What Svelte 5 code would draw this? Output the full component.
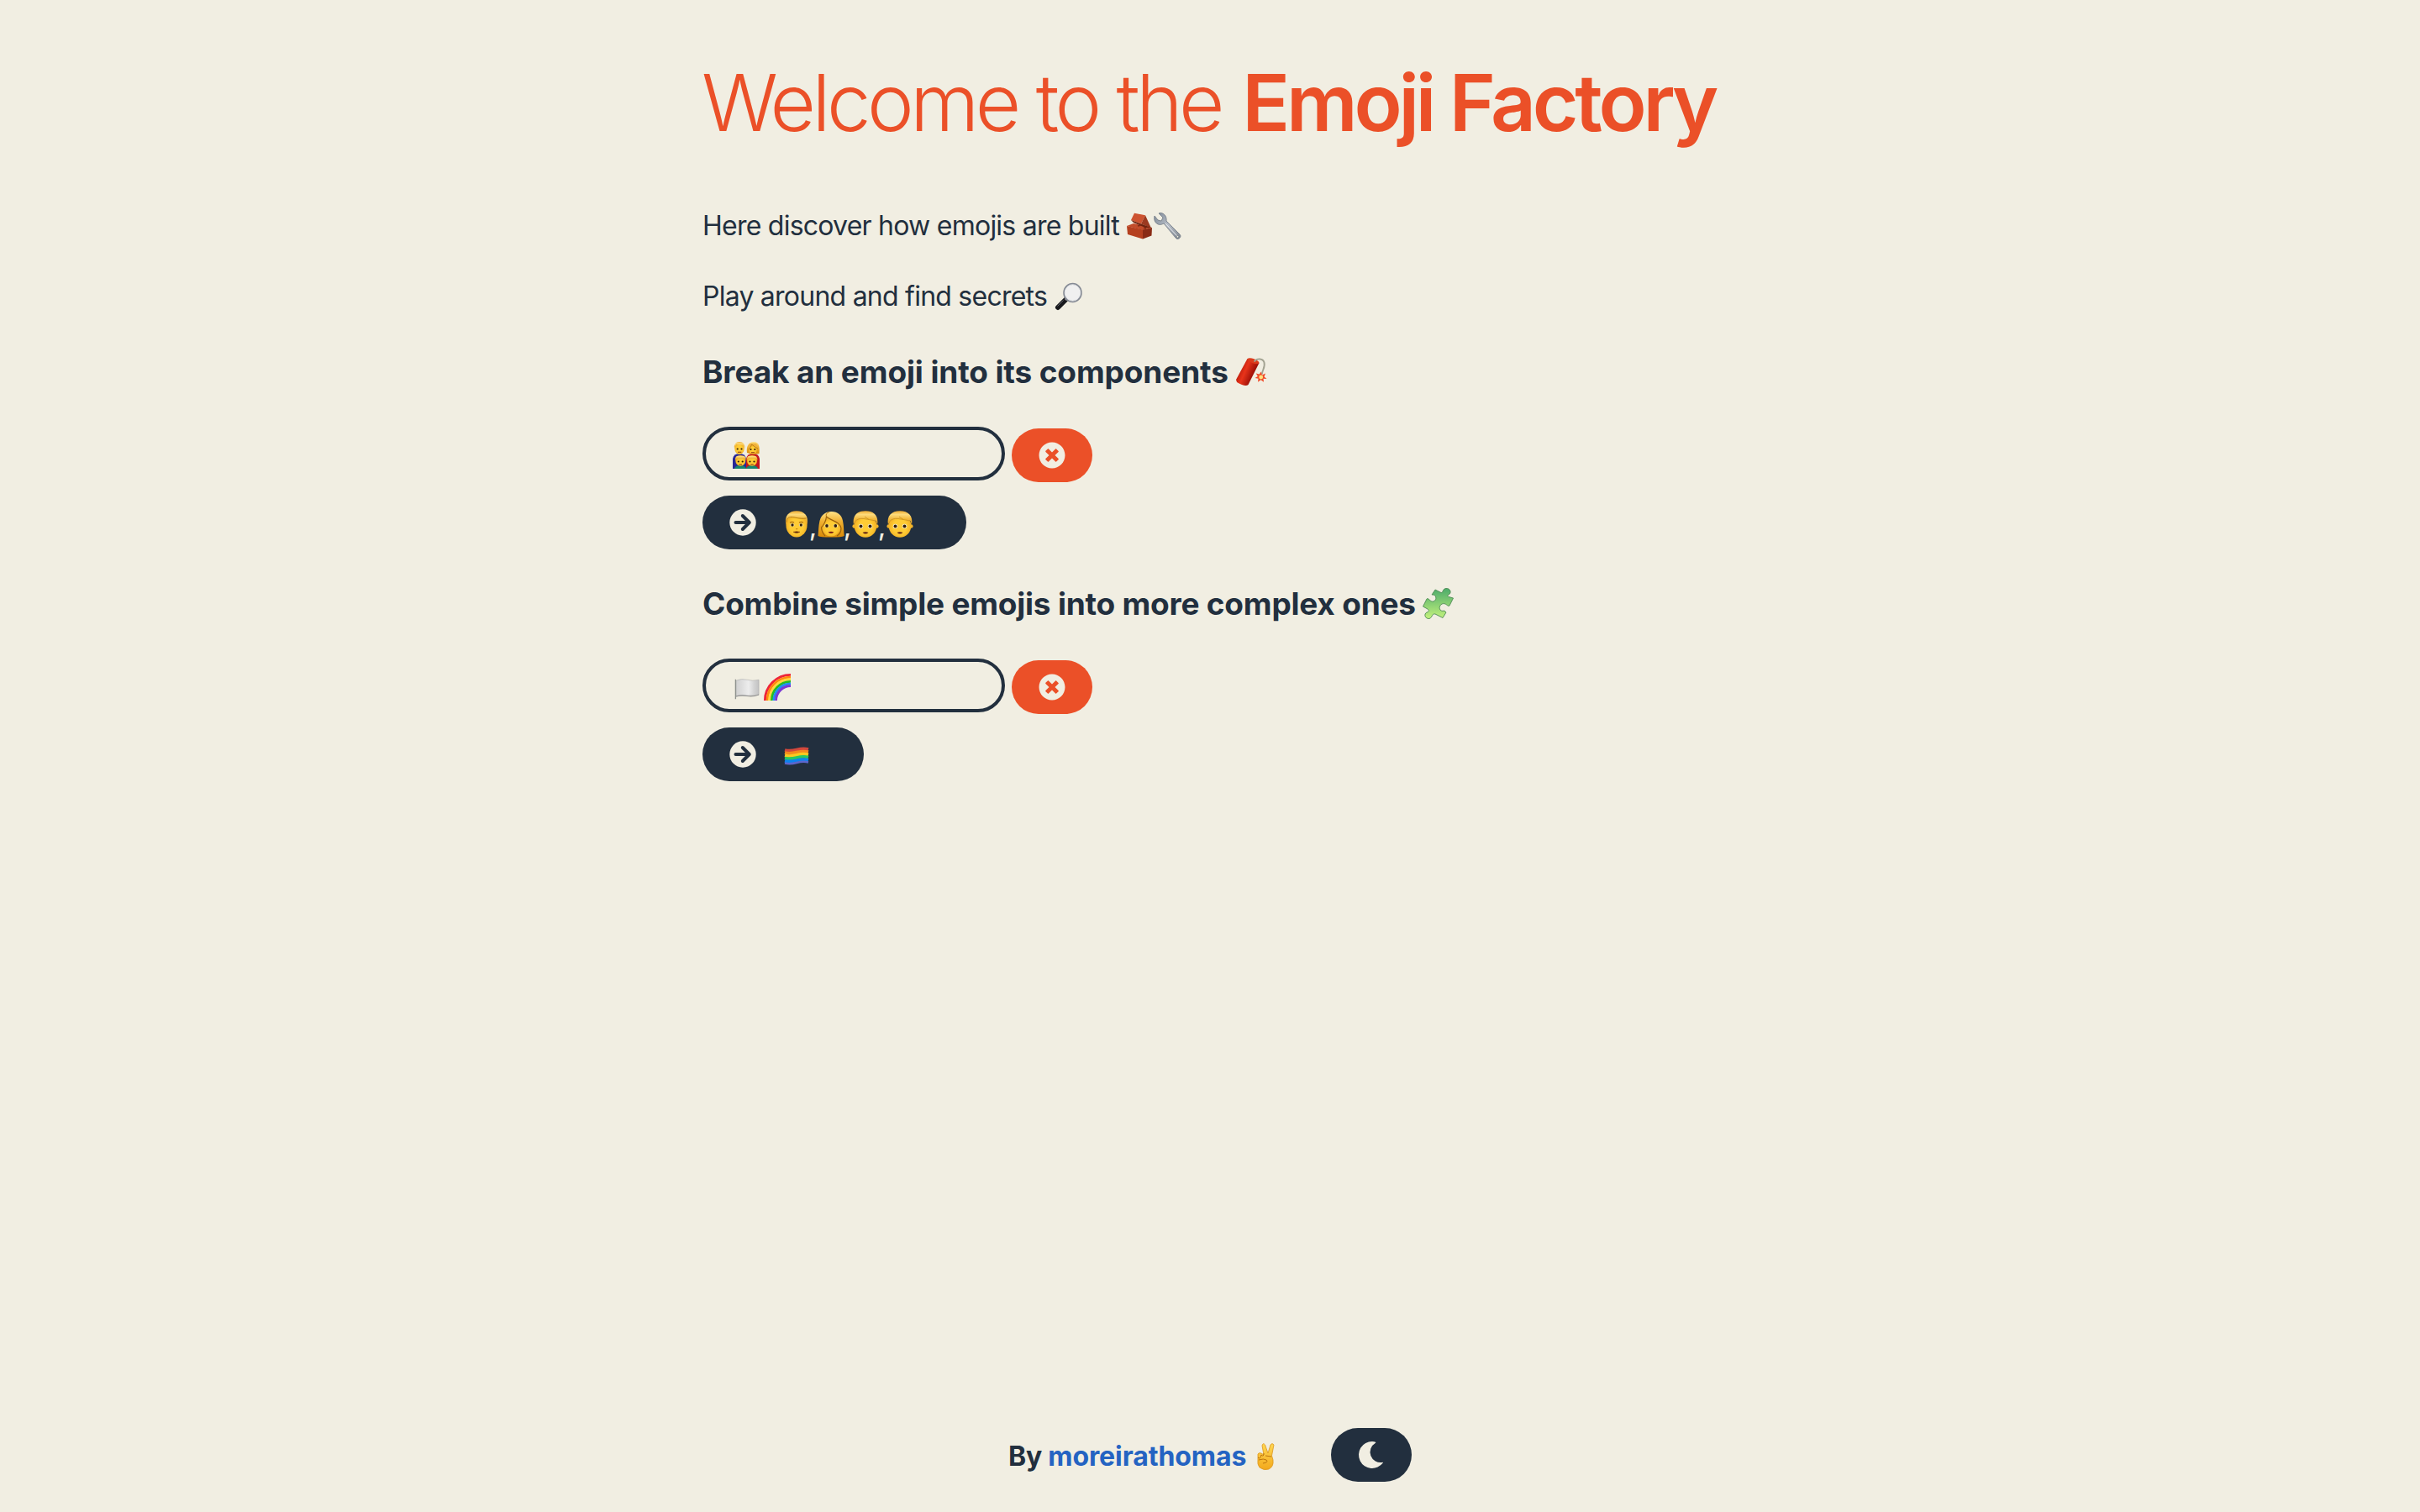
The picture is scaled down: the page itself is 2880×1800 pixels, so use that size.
<script>
  const clearIcon =
    'M256 8C119 8 8 119 8 256s111 248 248 248 248-111 248-248S393 8 256 8zm121.600 313.100c4.700 4.700 4.700 12.300 0 17L338 377.600c-4.700 4.700-12.300 4.700-17 0L256 312l-65.100 65.600c-4.700 4.700-12.300 4.700-17 0L134.400 338c-4.700-4.700-4.700-12.300 0-17l65.600-65-65.600-65.100c-4.700-4.700-4.700-12.300 0-17l39.600-39.600c4.700-4.700 12.300-4.700 17 0l65 65.700 65.100-65.600c4.700-4.700 12.300-4.700 17 0l39.600 39.600c4.700 4.700 4.700 12.300 0 17L312 256l65.600 65.100z';
</script>

{#snippet clear()}
  <button class="pill clear" aria-label="Clear">
    <svg class="glyph" viewBox="0 0 512 512"><path d={clearIcon} /></svg>
  </button>
{/snippet}

{#snippet arrow()}
  <svg class="glyph" viewBox="0 0 32 32">
    <circle cx="16" cy="16" r="15.700" />
    <path class="arrow" d="M7.500 16H23M15.800 8L23.800 16L15.800 24" />
  </svg>
{/snippet}

{#snippet man()}
  <svg class="face" viewBox="0 0 32 32">
    <ellipse cx="16" cy="17" rx="12.600" ry="14.500" fill="url(#skin)" />
    <path d="M3.500 17C1 6 7 .3 16 .3S31 6 28.500 17L27 11.500C25 8 22 9 19 8.500S10 7 6.500 9Q4.500 11 3.500 17Z" fill="url(#hair)" />
    <path d="M4 14C4 9 6 7.500 10 7.500S18 10 27.500 9" fill="none" stroke="#a66b0b" stroke-width=".8" />
    <path d="M8 14.300q2.500-1.700 5 0M19 14.300q2.500-1.700 5 0" fill="none" stroke="#a86a12" stroke-width="1.200" />
    <ellipse cx="11" cy="17" rx="2.500" ry="1.800" fill="#fff6da" /><ellipse cx="21.300" cy="17" rx="2.500" ry="1.800" fill="#fff6da" />
    <circle cx="11" cy="17" r="1.700" fill="#35200a" /><circle cx="21.300" cy="17" r="1.700" fill="#35200a" />
    <path d="M12 25.300q4 2.400 8 0q-4-1.300-8 0z" fill="#4b1d12" stroke="#94510e" stroke-width=".6" />
    <path d="M15 21.500q1.200.8 2.400 0" fill="none" stroke="#c47f0d" />
  </svg>
{/snippet}

{#snippet woman()}
  <svg class="face" viewBox="0 0 32 32">
    <path d="M.5 30C1 25 1 18 2.500 12C4.500 5 9 1 16.500 1S28.500 5 30 12C31.500 19 31 25 31.700 30Q29 31.500 16 31.500T.5 30Z" fill="url(#hairLong)" />
    <path d="M5 18C8 16 10 12 11 8C17 12 25 14 27.500 19C27 26 22 30.500 16 30.500S5.500 26 5 18Z" fill="url(#skin)" />
    <path d="M4.500 20C8 16 10 12 10.500 7C16 12 27 13 28 21Q28 27 23 30M4.500 20Q5 26 9 30" fill="none" stroke="#9b620b" stroke-width="1.200" />
    <path d="M10.500 7Q9 3 14 1.500" fill="none" stroke="#b6740e" />
    <ellipse cx="11" cy="18" rx="2.600" ry="2" fill="#fff6da" /><ellipse cx="21.300" cy="18" rx="2.600" ry="2" fill="#fff6da" />
    <circle cx="11" cy="18" r="1.900" fill="#35200a" /><circle cx="21.300" cy="18" r="1.900" fill="#35200a" />
    <path d="M12.500 25.500q3.500 3 7 0q-3.500-1.300-7 0z" fill="#7d2016" />
  </svg>
{/snippet}

{#snippet boy()}
  <svg class="face" viewBox="0 0 32 32">
    <circle cx="2.700" cy="18.500" r="2.300" fill="#f2b42b" /><circle cx="29.300" cy="18.500" r="2.300" fill="#f2b42b" />
    <ellipse cx="16" cy="18" rx="13.300" ry="13.800" fill="url(#skin)" />
    <path d="M2 17C0 6 6 .3 16 .3S32 6 30 17L28.500 12Q26 11 22 9.500Q16 8 7 10Q4 11.500 2 17Z" fill="url(#hair)" />
    <path d="M3.500 13Q7 8.500 14 9.500T28 12M15 7l5 3.500" fill="none" stroke="#c48b20" stroke-width=".7" />
    <circle cx="10.500" cy="18.500" r="2.700" fill="#fff6da" /><circle cx="21.500" cy="18.500" r="2.700" fill="#fff6da" />
    <circle cx="10.500" cy="18.500" r="2" fill="#35200a" /><circle cx="21.500" cy="18.500" r="2" fill="#35200a" />
    <path d="M12.500 26q3.500 3 7 0q-3.500-1.300-7 0z" fill="#5f2014" />
  </svg>
{/snippet}

<svg class="defs" aria-hidden="true">
  <defs>
    <radialGradient id="skin" cy=".55" r=".6"><stop offset=".5" stop-color="#ffcc35" /><stop offset="1" stop-color="#eda51c" /></radialGradient>
    <linearGradient id="hair" x2="0" y2="1"><stop stop-color="#eeab30" /><stop offset=".25" stop-color="#fddb7c" /><stop offset=".55" stop-color="#f3bb42" /><stop offset="1" stop-color="#dd9a20" /></linearGradient>
    <linearGradient id="hairLong" x2="0" y2="1"><stop stop-color="#ffe287" /><stop offset=".4" stop-color="#f0b030" /><stop offset="1" stop-color="#d98a08" /></linearGradient>
    <linearGradient id="stick" x1="0" y1=".35" x2=".8" y2=".75"><stop stop-color="#a01005" /><stop offset=".45" stop-color="#e8331a" /><stop offset="1" stop-color="#850503" /></linearGradient>
    <linearGradient id="puzzle" x2="0" y2="1"><stop stop-color="#4cab6a" /><stop offset="1" stop-color="#c4f27d" /></linearGradient>
    <linearGradient id="cloth"><stop stop-color="#d0d0d0" /><stop offset=".55" stop-color="#ededed" /><stop offset=".8" stop-color="#d2d2d2" /><stop offset="1" stop-color="#c2c2c2" /></linearGradient>
    <linearGradient id="steel" x2="1" y2="1"><stop stop-color="#7e8997" /><stop offset=".5" stop-color="#b7bdc6" /><stop offset="1" stop-color="#7c838d" /></linearGradient>
    <linearGradient id="palm" x2="0" y2="1"><stop stop-color="#ffd853" /><stop offset="1" stop-color="#f3a91c" /></linearGradient>
  </defs>
</svg>

<div class="page">
  <main>
    <h1><span class="light">Welcome to the</span> <span class="strong">Emoji Factory</span></h1>

    <p class="first">
      <span>Here discover how emojis are built</span>
      <svg class="brick" viewBox="0 0 31 32">
        <path d="M0 16L8 13L30 18L19 21Z" fill="#c24c2a" />
        <path d="M9 .7L22 3.300L17 13.500L5 9Z" fill="#cd5330" />
        <path d="M22 3.300L29 18.500L17 13.500Z" fill="#9c3a20" />
        <path d="M5 9L17 13.500L29 18L22 18L8 12Z" fill="#70230f" />
        <path d="M0 16L19 20.500V31.500L1 26Z" fill="#b5401f" />
        <path d="M19 20.500L30 18L29.500 27.500L19 31.500Z" fill="#8a2b15" />
        <path d="M13 16l4-1M20 18l3 1" stroke="#812a14" stroke-width="1.500" />
      </svg>
      <svg class="wrench" viewBox="0 0 32 33">
        <path d="M1 4C-1 12 6 17 12 13L26 30C29 34 34 29 31 26L15 10C16 4 11-1 6 1L11 6L9 10L5 9Z" fill="url(#steel)" stroke="#6d7682" stroke-width=".8" />
        <path d="M14 13L28 28" stroke="#e8ebef" stroke-width="1" /><circle cx="28.500" cy="28.700" r="1.300" fill="#f1eee2" stroke="#58616c" stroke-width=".6" />
      </svg>
    </p>
    <p class="second">
      <span>Play around and find secrets</span>
      <svg class="lens" viewBox="0 0 32 32">
        <path d="M12 20L3 29" stroke="#17181c" stroke-width="6" stroke-linecap="round" /><path d="M14 18L12 20" stroke="#a7a7ad" stroke-width="3" />
        <path d="M9.500 20.500L2.500 27.500" stroke="#62636a" stroke-width="1" />
        <ellipse cx="20.500" cy="11.500" rx="10.200" ry="10.700" fill="#f0f0f0" stroke="#858a94" stroke-width="2.200" /><ellipse cx="20.500" cy="11.500" rx="9.300" ry="9.800" fill="none" stroke="#fff" stroke-width=".7" />
      </svg>
    </p>

    <h2 class="break">
      <span>Break an emoji into its components</span>
      <svg class="dynamite" viewBox="0 0 36 34">
        <path d="M13.500 1Q21 1 27.500 6L14.500 32Q11 35 1 29L0 26Z" fill="url(#stick)" /><ellipse cx="20.500" cy="3.800" rx="7.300" ry="2.700" transform="rotate(20 20.500 3.800)" fill="#dc3b1c" />
        <path d="M21.500 4.500C25 0 32 .5 33.500 5.500C35 11 31.500 14 30.700 19.500" fill="none" stroke="#a3a392" stroke-width="1.900" />
        <path d="M29.500 16.500l1.500 4 4-2-1.500 4 3 2.500-4-.3.500 4-3.500-2.500-3.500 2.500.5-4-4-.8 3.300-2-2-3.500 4 1z" fill="#f14a27" /><circle cx="29.700" cy="23" r="2.400" fill="#ffe27e" />
      </svg>
    </h2>
    <div class="row">
      <div class="field">
        <svg class="family" viewBox="0 0 32 32">
          <path d="M0 32V20Q1 14 8 14T16 20V32Z" fill="#282797" /><path d="M16 32V20Q17 14 24 14T32 20V32Z" fill="#c4161c" />
          <path d="M17 13C16 7 18 0 25 0S32 7 31.500 14Q24 16 17 13Z" fill="url(#hairLong)" />
          <ellipse cx="8" cy="8" rx="5.700" ry="7" fill="url(#skin)" /><path d="M2 8Q1 0 8 0T14.200 8L13 4Q7 4 4 3Z" fill="url(#hair)" />
          <ellipse cx="24" cy="9" rx="5" ry="5.500" fill="url(#skin)" /><path d="M18 8Q22 7 22.500 3Q27 7 30 7L28 2H20Z" fill="#efb13b" />
          <path d="M18.500 9Q22 7 22.500 3Q27 7 30 8" fill="none" stroke="#a96c0e" stroke-width=".7" />
          <path d="M2 32Q3 28 9 28T16 32M16 32Q17 28 23 28T30 32" fill="#16856d" />
          <circle cx="9.300" cy="22.800" r="6" fill="url(#skin)" /><circle cx="23" cy="22.800" r="6" fill="url(#skin)" />
          <path d="M3 22Q2 16 9.300 16T15.600 22Q12 18 3 22M16.600 22Q16 16 23 16T29.400 22Q25 18 16.600 22" fill="url(#hair)" />
          <g fill="#35200a"><circle cx="5.700" cy="8.500" r="1.100" /><circle cx="10.500" cy="8.500" r="1.100" /><circle cx="21.500" cy="9" r="1.100" /><circle cx="26.300" cy="9" r="1.100" /><circle cx="6.800" cy="23.500" r="1.100" /><circle cx="11.700" cy="23.500" r="1.100" /><circle cx="20.500" cy="23.500" r="1.100" /><circle cx="25.500" cy="23.500" r="1.100" /></g>
          <path d="M6 12.300h4.300M22 12.700h4M7.500 27h3.500M21.300 27h3.500" stroke="#843014" stroke-width="1.100" />
        </svg>
      </div>
      {@render clear()}
    </div>
    <div class="pill result">
      {@render arrow()}
      <div class="people">{@render man()}<b>,</b>{@render woman()}<b>,</b>{@render boy()}<b>,</b>{@render boy()}</div>
    </div>

    <h2 class="combine">
      <span>Combine simple emojis into more complex ones</span>
      <svg class="piece" viewBox="0 0 37 37">
        <path d="M15 2L22 5.500C25 6 23 1 28 .5C33 0 35 6 31 8C29 9 30 10 31 10.500L36.500 12L32 21C30 23 28 17 23 19C18 22 20 29 26 27L28 29L24 35.500L15 31C11 30 12 35 8 36.500C3 37 1 31 5 29C8 28 8 27 6 25L.5 22L5 13C7 11 9 17 13 16C18 14 16 7 11 8Z" fill="url(#puzzle)" stroke="#4e8a55" stroke-width=".9" />
      </svg>
    </h2>
    <div class="row">
      <div class="field">
        <svg class="flag" viewBox="0 0 32 26">
          <path d="M2 2Q9-1 16 1T31 1V20Q24 21 16 21T2 22Z" fill="url(#cloth)" stroke="#aaa" stroke-width=".6" />
          <path d="M2 22Q9 20 16 21.500T31 20" fill="none" stroke="#929292" stroke-width="1.200" /><path d="M1.500 .5V25.500" stroke="#8e918d" stroke-width="1.400" />
        </svg>
        <svg class="rainbow" viewBox="0 0 32 32">
          <g fill="none" stroke-width="2.900">
            <path d="M1.400 32A30.600 30.600 0 0 1 32 1.400" stroke="#ee2438" /><path d="M4.100 32A27.900 27.900 0 0 1 32 4.100" stroke="#ff8a0e" /><path d="M6.800 32A25.200 25.200 0 0 1 32 6.800" stroke="#ffd83b" />
            <path d="M9.400 32A22.600 22.600 0 0 1 32 9.400" stroke="#24bd20" /><path d="M12 32A20 20 0 0 1 32 12" stroke="#1f8ff1" /><path d="M14.500 32A17.500 17.500 0 0 1 32 14.500" stroke="#7a38d4" />
          </g>
        </svg>
      </div>
      {@render clear()}
    </div>
    <div class="pill result short">
      {@render arrow()}
      <svg class="pride" viewBox="0 0 28 21">
        <g fill="none" stroke-width="3.800">
          <path d="M0 3Q6 4.500 14 2.500T28 2" stroke="#d2483c" /><path d="M0 6.200Q6 7.700 14 5.700T28 5.200" stroke="#f48a1c" /><path d="M0 9.400Q6 10.900 14 8.900T28 8.400" stroke="#fbc91f" />
          <path d="M0 12.600Q6 14.100 14 12.100T28 11.600" stroke="#28c762" /><path d="M0 15.800Q6 17.300 14 15.300T28 14.800" stroke="#0d82ee" /><path d="M0 18.500Q6 20 14 18T28 17.500" stroke="#5d66cb" stroke-width="2.500" />
        </g>
      </svg>
    </div>
  </main>

  <footer>
    <span class="by">By</span>
    <a href="#author">moreirathomas</a>
    <svg class="peace" viewBox="0 0 21 32">
      <path d="M8 14L6 3Q7-1 9.500 2L13 12L16 2Q18-1 20 2L17.500 15L19 20Q20 28 14 31Q8 33 3 29Q0 25 1 20V13Q2 11 5 12Z" fill="url(#palm)" stroke="#dc951d" stroke-width=".8" />
      <path d="M1 17Q4 20 5 14Q8 17 8 12M2 20Q8 18 11 20Q14 23 7 24M10 15l7 1" fill="none" stroke="#bd740d" stroke-width="1" />
    </svg>
    <button class="pill theme" aria-label="Dark mode">
      <svg class="moon" viewBox="0 0 30 32"><path d="M20 .8Q18 0 16 0A16 16 0 1 0 28.800 25.600Q29.500 24.700 28.200 24.900A12.400 12.400 0 0 1 19.700 2Q20.900 1.100 20 .8Z" /></svg>
    </button>
  </footer>
</div>

<style>
  :global(body) { background: #f1eee2; }
  .page {
    box-sizing: border-box; height: 1800px; padding: 0 836px 36px;
    display: flex; flex-direction: column; justify-content: space-between;
    background: #f1eee2; color: #222f3e;
    font-family: Inter, "Liberation Sans", sans-serif; font-size: 32px;
  }
  svg { display: block; flex: none; overflow: visible; }
  .defs { position: absolute; width: 0; height: 0; }
  main { display: flex; flex-direction: column; align-items: flex-start; }
  h1 { margin: 65px 0 1px -1px; line-height: 114px; height: 114px; font-size: 94px; color: #eb5028; white-space: nowrap; }
  .light { font-weight: 350; letter-spacing: -4.500px; }
  .strong { font-weight: 590; letter-spacing: -4.200px; margin-left: 3px; }
  p, h2 { display: flex; align-items: center; margin: 0; white-space: nowrap; }
  p { height: 40px; line-height: 40px; letter-spacing: -.76px; }
  .first { margin-top: 69px; }
  .second { margin-top: 44px; }
  h2 { height: 48px; line-height: 48px; font-size: 37px; font-weight: 700; letter-spacing: -.13px; }
  .break { margin-top: 46px; }
  .combine { margin-top: 41px; letter-spacing: -.22px; }
  .brick { width: 31px; height: 32px; margin-left: 9px; }
  .wrench { width: 32px; height: 33px; margin-left: 1px; }
  .lens { width: 32px; height: 32px; margin-left: 10px; }
  .dynamite { width: 36px; height: 34px; margin-left: 9px; }
  .piece { width: 37px; height: 37px; margin: -1px 0 0 8px; }
  .row { display: flex; gap: 8px; margin-top: 41px; }
  .field { box-sizing: border-box; width: 360px; height: 64px; border: 4px solid #222f3e; border-radius: 32px; padding: 0 32px; display: flex; align-items: center; }
  .family { width: 32px; height: 32px; margin-top: 4px; }
  .flag { width: 30px; height: 25px; margin: 8px 0 0 2px; }
  .rainbow { width: 32px; height: 32px; margin: 3px 0 0 5px; }
  .pill { box-sizing: border-box; height: 64px; border: 0; border-radius: 32px; padding: 0; display: flex; align-items: center; background: #222f3e; color: #f1eee2; }
  .clear { width: 96px; margin-top: 2px; justify-content: center; background: #eb5028; }
  .glyph { width: 32px; height: 32px; fill: #f1eee2; }
  .arrow { fill: none; stroke: #222f3e; stroke-width: 4; stroke-linecap: round; stroke-linejoin: round; }
  .result { width: 314px; margin-top: 16px; padding-left: 32px; }
  .short { width: 192px; }
  .people { display: flex; margin: 4px 0 0 32px; }
  .face { width: 32px; height: 32px; }
  .people b { width: 9px; height: 32px; font-weight: 500; font-size: 30px; line-height: 38px; text-indent: -1px; }
  .pride { width: 28px; height: 21px; margin: 4px 0 0 34px; }
  footer { display: flex; align-items: center; height: 64px; padding-left: 364px; font-weight: 700; letter-spacing: -.08px; }
  .by, a { padding-top: 3px; }
  a { color: #2463c2; text-decoration: none; margin-left: 7px; }
  .peace { width: 21px; height: 32px; margin: 4px 0 0 13px; }
  .theme { width: 96px; margin-left: 67px; justify-content: center; }
  .moon { width: 30px; height: 32px; fill: #f1eee2; }
</style>
